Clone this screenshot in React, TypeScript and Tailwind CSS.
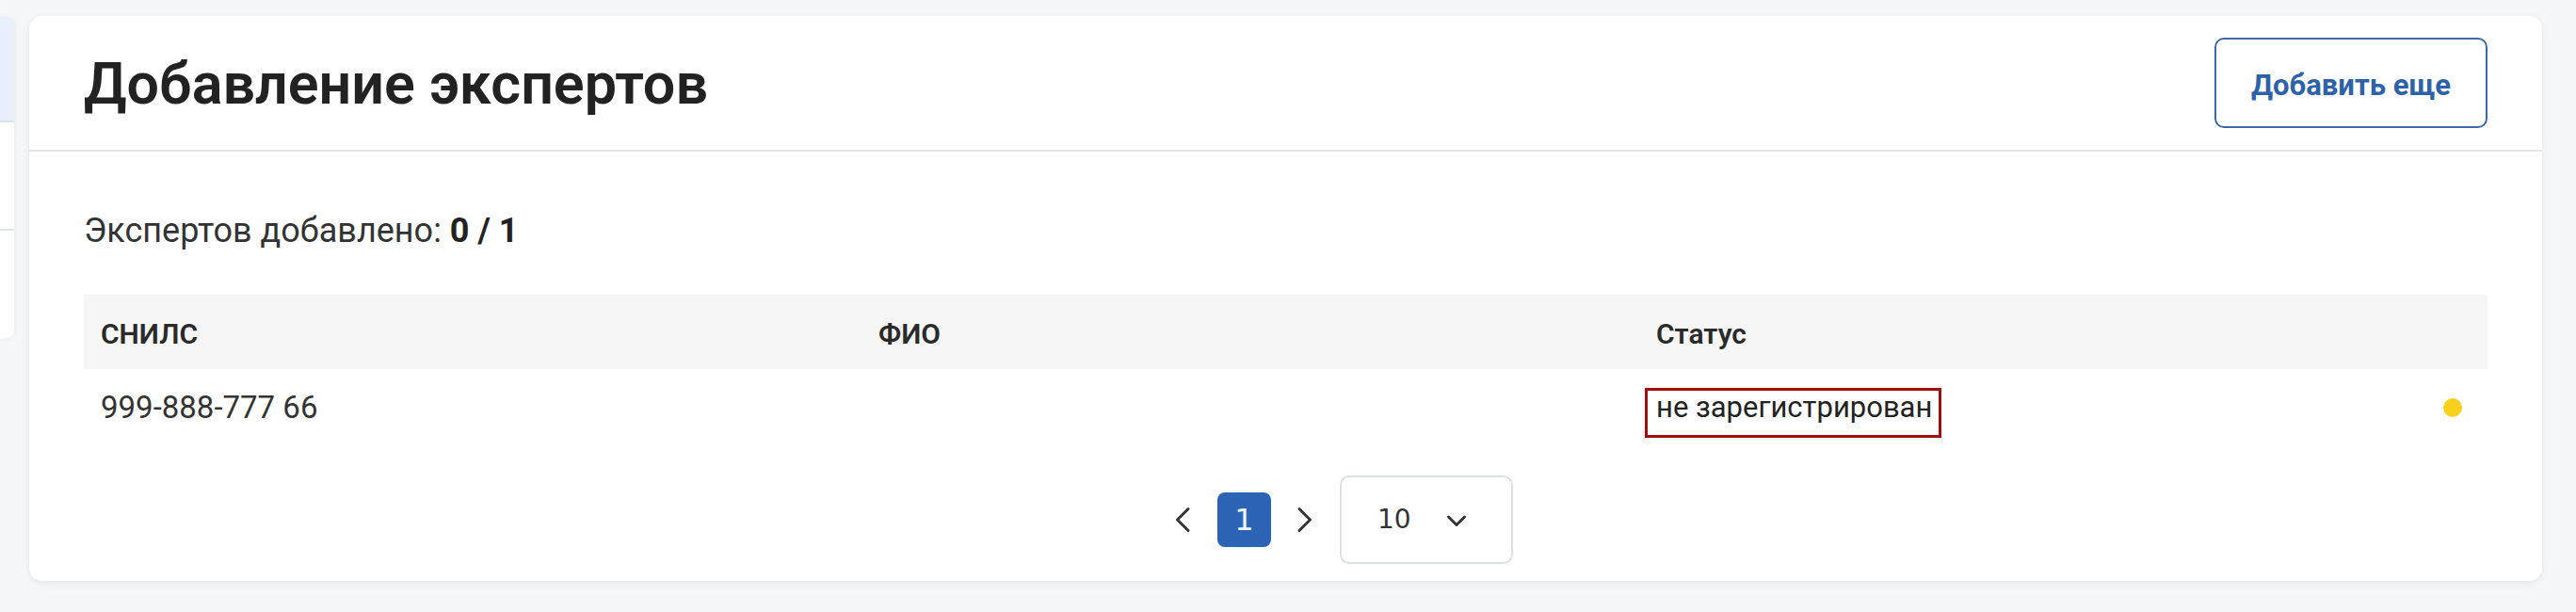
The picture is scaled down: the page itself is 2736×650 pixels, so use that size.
const columns = ['СНИЛС', 'ФИО', 'Статус'];

const experts = [{ snils: '999-888-777 66', fio: '', status: 'не зарегистрирован' }];

function SidePanel() {
  return (
    <div className="mt-[17px] flex h-[343px] w-[15px] shrink-0 flex-col overflow-hidden rounded-r-[10px] bg-white shadow-[1px_0_4px_rgba(0,0,0,0.06)]">
      <div className="h-[113px] border-b-2 border-[#dfe3e8] bg-[#e8f0fd]" />
      <div className="h-[115px] border-b-2 border-[#dfe3e8]" />
    </div>
  );
}

function Pagination() {
  return (
    <div className="mt-[31px] flex justify-center pl-[104px]">
      <div className="flex items-center">
        <button className="flex h-[56px] w-[56px] items-center justify-center text-[#333]">
          <svg width="18" height="28" viewBox="0 0 18 28" fill="none" stroke="currentColor" strokeWidth="3" strokeLinecap="round" strokeLinejoin="round">
            <path d="M15 2.5 L3.5 14 L15 25.5" />
          </svg>
        </button>
        <div className="ml-[9px] flex h-[58px] w-[57px] items-center justify-center rounded-[8px] bg-[#2c64b5] font-['DejaVu_Sans',sans-serif] text-[32px] text-[#eef3fb]">
          1
        </div>
        <button className="ml-[8px] flex h-[56px] w-[56px] items-center justify-center text-[#333]">
          <svg width="18" height="28" viewBox="0 0 18 28" fill="none" stroke="currentColor" strokeWidth="3" strokeLinecap="round" strokeLinejoin="round">
            <path d="M3 2.5 L14.5 14 L3 25.5" />
          </svg>
        </button>
        <div className="ml-[9px] flex h-[94px] w-[184px] items-center rounded-[10px] border-2 border-[#dcdfe4] bg-white pl-[38px] font-['DejaVu_Sans',sans-serif] text-[28px] text-[#333]">
          <span>10</span>
          <svg width="22" height="15" viewBox="0 0 22 15" fill="none" stroke="currentColor" strokeWidth="3" strokeLinecap="round" strokeLinejoin="round" className="ml-[37px] mt-[2px]">
            <path d="M2.5 3 L11 11.5 L19.5 3" />
          </svg>
        </div>
      </div>
    </div>
  );
}

export default function App() {
  return (
    <div className="flex h-[650px] w-full bg-[#f6f7f9] font-['Roboto',sans-serif]">
      <SidePanel />

      <div className="ml-[16px] mt-[17px] flex h-[600px] w-[2669px] flex-col rounded-[14px] bg-white shadow-[0_2px_8px_rgba(0,0,0,0.08)]">
        {/* Header */}
        <div className="flex h-[144px] shrink-0 items-center justify-between border-b-2 border-[#e3e5e9] px-[58px]">
          <h1 className="pt-[4px] text-[61px] font-semibold text-[#222]">Добавление экспертов</h1>
          <button className="flex h-[96px] w-[290px] items-center justify-center rounded-[10px] border-2 border-[#3b68a6] pt-[6px] text-[31px] font-bold text-[#2d62a8]">
            Добавить еще
          </button>
        </div>

        {/* Body */}
        <div className="flex flex-col px-[58px] pt-[62px]">
          <p className="text-[36px] leading-[44px] text-[#333]">
            Экспертов добавлено: <span className="font-bold text-[#222]">0 / 1</span>
          </p>

          <div className="mt-[46px]">
            <div className="grid h-[79px] grid-cols-[1fr_1fr_1fr_75px] items-center bg-[#f6f6f6] pt-[4px] text-[30px] font-semibold text-[#2a2a2a]">
              {columns.map((col) => (
                <div key={col} className="pl-[18px]">
                  {col}
                </div>
              ))}
              <div />
            </div>

            {experts.map((expert) => (
              <div
                key={expert.snils}
                className="grid h-[82px] grid-cols-[1fr_1fr_1fr_75px] items-center text-[#333]"
              >
                <div className="pl-[18px] text-[33px]">{expert.snils}</div>
                <div className="pl-[18px] text-[33px]">{expert.fio}</div>
                <div className="flex pl-[6px]">
                  <span className="mt-[11px] border-[3px] border-[#a00e0e] pb-[12px] pl-[9px] pr-[7px] text-[31px] leading-[35px] text-[#222]">
                    {expert.status}
                  </span>
                </div>
                <div className="flex justify-center">
                  <span className="h-[20px] w-[20px] rounded-full bg-[#f9d11c]" />
                </div>
              </div>
            ))}
          </div>

          <Pagination />
        </div>
      </div>
    </div>
  );
}
